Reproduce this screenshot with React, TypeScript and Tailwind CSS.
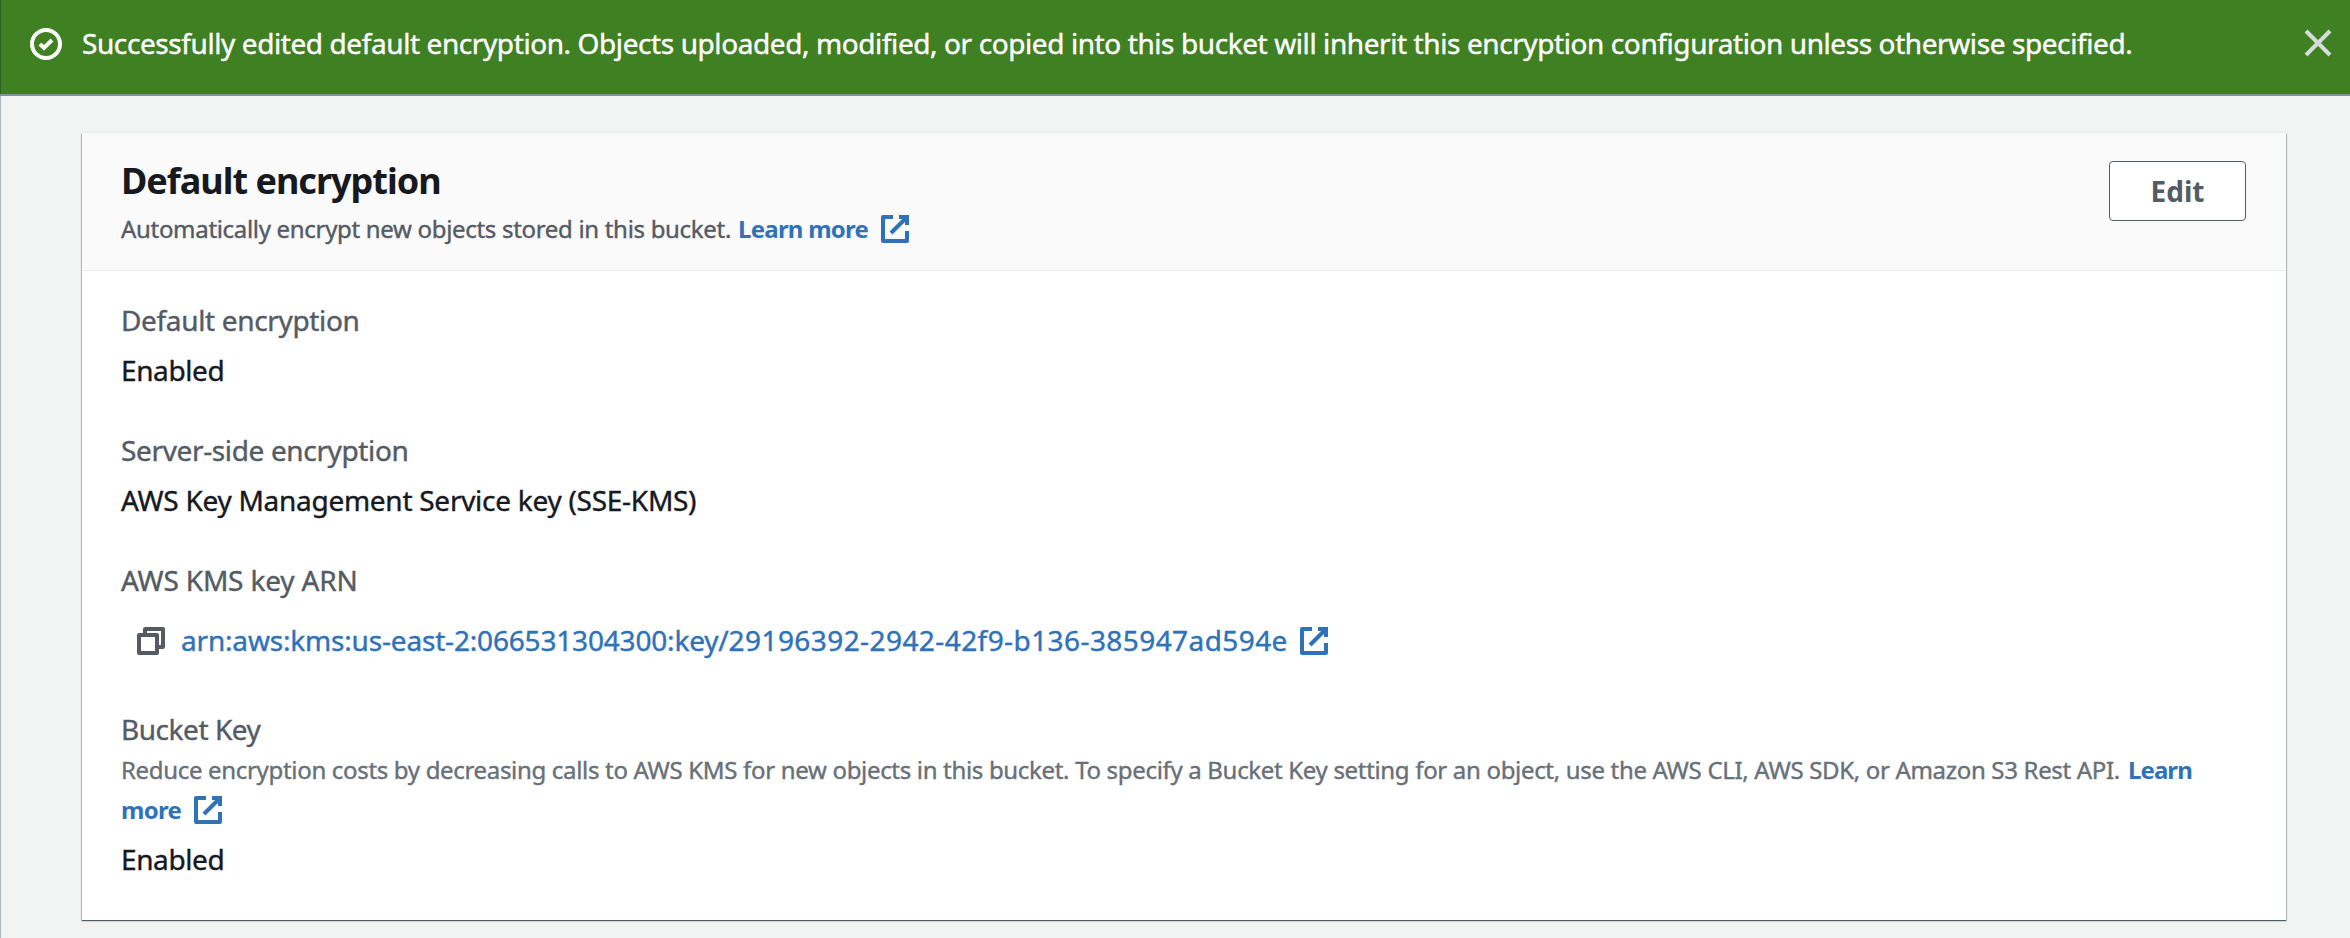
import React from "react";

type IconProps = { className?: string };

function ExternalIcon({ className = "" }: IconProps) {
  return (
    <svg viewBox="0 0 16 16" fill="none" stroke="currentColor" strokeWidth="2" className={`size-8 shrink-0 ${className}`}>
      <path d="M10 2h4v4" />
      <path d="m6 10 8-8" />
      <path d="M14 9.048V14H2V2h5" strokeLinejoin="round" />
    </svg>
  );
}

function CopyIcon({ className = "" }: IconProps) {
  return (
    <svg viewBox="0 0 16 16" fill="none" stroke="currentColor" strokeWidth="2" strokeLinejoin="round" className={`size-8 shrink-0 ${className}`}>
      <path d="M2 5h9v9H2z" />
      <path d="M5 5V2h9v9h-3" />
    </svg>
  );
}

function SuccessIcon({ className = "" }: IconProps) {
  return (
    <svg viewBox="0 0 16 16" fill="none" stroke="currentColor" strokeWidth="2" className={`size-8 shrink-0 ${className}`}>
      <circle cx="8" cy="8" r="7" />
      <path d="m5 8 2 2 4-4" />
    </svg>
  );
}

function CloseIcon({ className = "" }: IconProps) {
  return (
    <svg viewBox="0 0 16 16" fill="none" stroke="currentColor" strokeWidth="2" className={`size-8 shrink-0 ${className}`}>
      <path d="m2 2 12 12M14 2 2 14" />
    </svg>
  );
}

function Label({ children, className = "" }: { children: React.ReactNode; className?: string }) {
  return <dt className={`text-[28px] leading-10 text-[#545b64] ${className}`}>{children}</dt>;
}

function Value({ children, className = "" }: { children: React.ReactNode; className?: string }) {
  return <dd className={`text-[28px] leading-10 text-[#16191f] ${className}`}>{children}</dd>;
}

export default function App() {
  return (
    <div className="flex h-[938px] w-[2350px] flex-col overflow-hidden bg-[#f2f3f3] font-['Noto_Sans','Open_Sans',sans-serif] whitespace-nowrap shadow-[inset_2px_0_1px_-1px_#aab2ba] [-webkit-text-stroke:0.4px_currentColor]">
      <div className="flex h-24 items-start border-b-2 border-[#8b8f93] bg-[#3f8023] pt-[23px] pr-4 pl-[30px] text-white shadow-[inset_2px_0_1px_-1px_#2c5f2a]">
        <SuccessIcon className="mt-[5px]" />
        <p className="ml-5 text-[28px] leading-10 tracking-[-0.41px]">
          Successfully edited default encryption. Objects uploaded, modified, or copied into this bucket will inherit this
          encryption configuration unless otherwise specified.
        </p>
        <button aria-label="Dismiss" className="mt-1 ml-auto text-[#d5dbdb]">
          <CloseIcon />
        </button>
      </div>

      <section className="mt-[37px] ml-[82px] flex h-[787px] w-[2204px] flex-col bg-white shadow-[0_1px_1px_0_rgba(0,28,36,0.5),1px_1px_1px_0_rgba(0,28,36,0.2),-1px_1px_1px_0_rgba(0,28,36,0.2),0_-1px_0_0_#e9ecec]">
        <header className="flex h-[138px] items-start justify-between border-b border-[#eaeded] bg-[#fafafa] pr-10 pl-[39px]">
          <div className="pt-[26px]">
            <h2 className="text-[36px] leading-[44px] font-bold tracking-[-1px] text-[#16191f] [-webkit-text-stroke:0]">
              Default encryption
            </h2>
            <div className="mt-1.5 flex h-10 items-center text-2xl leading-10 text-[#545b64]">
              <p className="tracking-[-0.312px]">Automatically encrypt new objects stored in this bucket.</p>
              <a className="ml-[7px] flex items-center font-bold text-[#2f72b8] [-webkit-text-stroke:0]">
                <span className="tracking-[-0.75px]">Learn more</span>
                <ExternalIcon className="ml-[11px]" />
              </a>
            </div>
          </div>
          <button className="mt-7 h-[60px] w-[137px] rounded-[4px] border border-[#545b64] bg-white text-[28px] leading-10 font-bold text-[#545b64] [-webkit-text-stroke:0]">
            Edit
          </button>
        </header>

        <dl className="px-[39px] pt-[29px]">
          <Label className="tracking-[-0.34px]">Default encryption</Label>
          <Value className="mt-2.5 tracking-[-0.4px]">Enabled</Value>

          <Label className="mt-10 tracking-[-0.36px]">Server-side encryption</Label>
          <Value className="mt-2.5 tracking-[-0.27px]">AWS Key Management Service key (SSE-KMS)</Value>

          <Label className="mt-10 tracking-[-0.18px]">AWS KMS key ARN</Label>
          <dd className="mt-5 flex h-10 items-center pt-px pl-[14px] text-[28px] leading-10">
            <CopyIcon className="text-[#545b64]" />
            <a className="ml-[14px] flex items-center text-[#2f72b8]">
              <span className="-mt-px">
                <span className="tracking-[-0.18px]">arn:aws:kms:us-east-2:066531304300:key/</span>
                <span className="tracking-[0.42px]">29196392-2942-42f9-b136-385947ad594e</span>
              </span>
              <ExternalIcon className="ml-2.5" />
            </a>
          </dd>

          <Label className="mt-[49px] tracking-[-0.45px]">Bucket Key</Label>
          <dd className="mt-px text-2xl leading-10 text-[#687078]">
            <p>
              <span className="tracking-[-0.321px]">
                Reduce encryption costs by decreasing calls to AWS KMS for new objects in this bucket. To specify a Bucket
                Key setting for an object, use the AWS CLI, AWS SDK, or Amazon S3 Rest API.
              </span>
              <a className="ml-2 font-bold tracking-[-0.9px] text-[#2f72b8] [-webkit-text-stroke:0]">Learn</a>
            </p>
            <a className="flex items-center font-bold text-[#2f72b8] [-webkit-text-stroke:0]">
              <span className="tracking-[-0.72px]">more</span>
              <ExternalIcon className="ml-[11px]" />
            </a>
          </dd>
          <Value className="mt-[9px] tracking-[-0.4px]">Enabled</Value>
        </dl>
      </section>
    </div>
  );
}
